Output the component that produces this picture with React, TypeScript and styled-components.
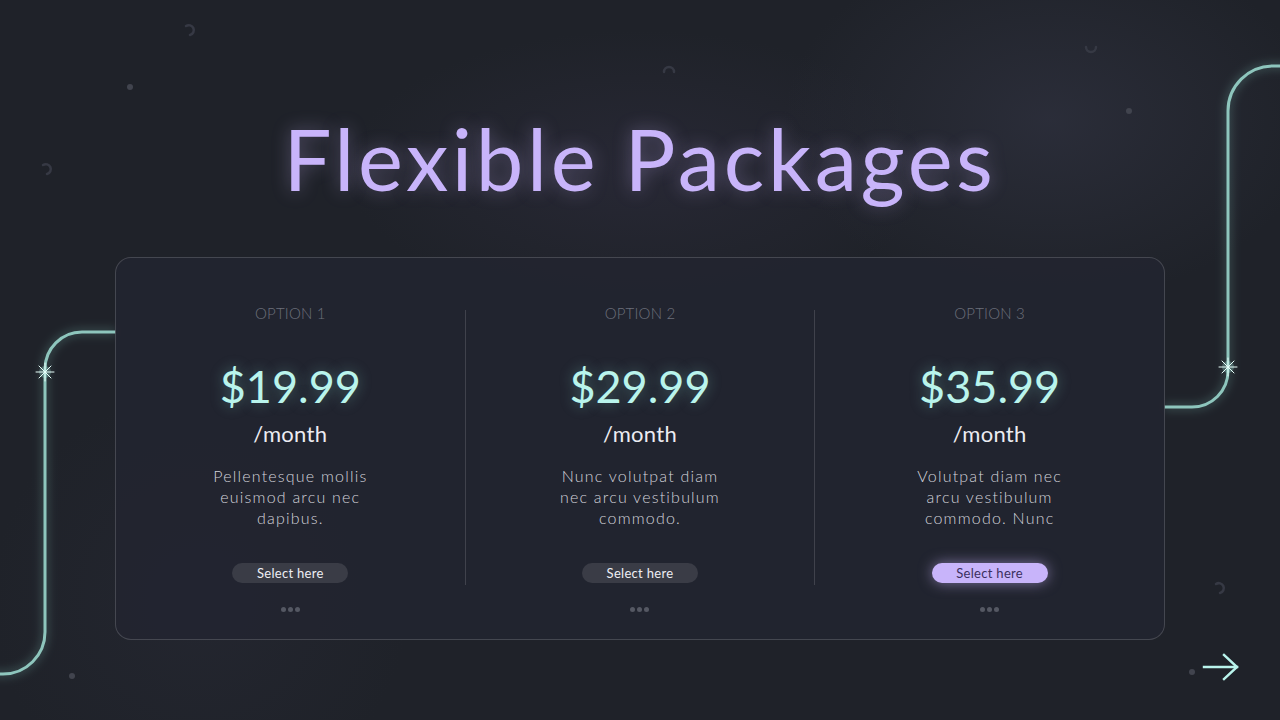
import React from "react";
import styled, { createGlobalStyle } from "styled-components";

const Global = createGlobalStyle`
  html, body { margin: 0; padding: 0; background: #1f2229; }
  * { box-sizing: border-box; }
`;

const Page = styled.div`
  position: relative;
  width: 1280px;
  height: 720px;
  overflow: hidden;
  font-family: "Lato", "Inter", sans-serif;
  background:
    radial-gradient(ellipse 380px 260px at 1050px 120px, rgba(52, 54, 70, 0.55), transparent 70%),
    radial-gradient(ellipse 420px 200px at 640px 170px, rgba(48, 46, 64, 0.5), transparent 70%),
    radial-gradient(ellipse 300px 300px at 200px 600px, rgba(40, 42, 54, 0.5), transparent 70%),
    #1f2229;
  display: flex;
  flex-direction: column;
  align-items: center;
`;

const Deco = styled.svg`
  position: absolute;
  inset: 0;
  pointer-events: none;
`;

const Title = styled.h1`
  position: relative;
  margin: 108px 0 0;
  height: 100px;
  line-height: 100px;
  font-family: "Lato", sans-serif;
  font-weight: 400;
  font-size: 85px;
  letter-spacing: 3.6px;
  color: #c8b4fa;
  text-shadow: 0 0 18px rgba(200, 180, 250, 0.35);
`;

const Card = styled.div`
  position: relative;
  margin-top: 49px;
  width: 1050px;
  height: 383px;
  border: 1px solid rgba(255, 255, 255, 0.16);
  border-radius: 16px;
  background: rgba(34, 36, 48, 0.85);
  display: grid;
  grid-template-columns: 1fr 1px 1fr 1px 1fr;
  padding-top: 45px;
`;

const Divider = styled.div`
  align-self: start;
  margin-top: 7px;
  height: 275px;
  background: rgba(255, 255, 255, 0.14);
`;

const Column = styled.div`
  display: flex;
  flex-direction: column;
  align-items: center;
  text-align: center;
`;

const Option = styled.div`
  height: 20px;
  line-height: 20px;
  font-size: 15px;
  font-weight: 300;
  color: #6d707b;
  letter-spacing: 0.2px;
`;

const Price = styled.div`
  margin-top: 38px;
  height: 50px;
  line-height: 50px;
  font-size: 45px;
  font-weight: 400;
  color: #b9f4ec;
  text-shadow: 0 0 14px rgba(150, 240, 230, 0.35);
`;

const Per = styled.div`
  margin-top: 9px;
  height: 28px;
  line-height: 28px;
  font-size: 22px;
  letter-spacing: 0.3px;
  color: #ececf2;
`;

const Desc = styled.p`
  margin: 17px 0 0;
  width: 174px;
  font-size: 16px;
  line-height: 21px;
  font-weight: 300;
  letter-spacing: 1.2px;
  color: #d2d2da;
`;

const Button = styled.button<{ $active?: boolean }>`
  margin-top: 35px;
  width: 116px;
  height: 20px;
  border: none;
  border-radius: 10px;
  padding: 0;
  font-family: "Lato", sans-serif;
  font-size: 13px;
  font-weight: 400;
  letter-spacing: 0.3px;
  color: ${(p) => (p.$active ? "#3b2f5e" : "#eeeef4")};
  background: ${(p) => (p.$active ? "#c8b4fa" : "#3a3c46")};
  box-shadow: ${(p) => (p.$active ? "0 0 14px rgba(200, 180, 250, 0.55)" : "none")};
`;

const Dots = styled.div`
  margin-top: 24px;
  display: flex;
  gap: 2px;
`;

const Dot = styled.span`
  width: 5px;
  height: 5px;
  border-radius: 50%;
  background: #555863;
`;

const ArrowWrap = styled.div`
  position: absolute;
  right: 40px;
  bottom: 38px;
  width: 38px;
  height: 30px;
`;

const Sparkle = ({ x, y }: { x: number; y: number }) => (
  <g transform={`translate(${x} ${y})`}>
    <circle r="6" fill="rgba(180,255,245,0.25)" />
    <g stroke="#e8fffb" strokeWidth="1" strokeLinecap="round">
      <line x1="-9" y1="0" x2="9" y2="0" />
      <line x1="0" y1="-9" x2="0" y2="9" />
      <line x1="-6" y1="-6" x2="6" y2="6" />
      <line x1="-6" y1="6" x2="6" y2="-6" />
    </g>
  </g>
);

const plans = [
  { name: "OPTION 1", price: "$19.99", desc: "Pellentesque mollis euismod arcu nec dapibus.", active: false },
  { name: "OPTION 2", price: "$29.99", desc: "Nunc volutpat diam nec arcu vestibulum commodo.", active: false },
  { name: "OPTION 3", price: "$35.99", desc: "Volutpat diam nec arcu vestibulum commodo. Nunc", active: true },
];

export default function App() {
  return (
    <>
      <Global />
      <Page>
        <Deco width="1280" height="720" viewBox="0 0 1280 720">
          <defs>
            <filter id="glow" x="-50%" y="-50%" width="200%" height="200%">
              <feGaussianBlur stdDeviation="4" />
            </filter>
          </defs>
          <path
            d="M116 332 H82 A37 37 0 0 0 45 369 V632 A42 42 0 0 1 3 674 H-10"
            fill="none"
            stroke="rgba(140,210,200,0.2)"
            strokeWidth="8"
            filter="url(#glow)"
          />
          <path
            d="M116 332 H82 A37 37 0 0 0 45 369 V632 A42 42 0 0 1 3 674 H-10"
            fill="none"
            stroke="#8ec6bd"
            strokeWidth="3"
          />
          <path
            d="M1164 407 H1192 A36 36 0 0 0 1228 371 V111 A45 45 0 0 1 1273 66 H1290"
            fill="none"
            stroke="rgba(140,210,200,0.2)"
            strokeWidth="8"
            filter="url(#glow)"
          />
          <path
            d="M1164 407 H1192 A36 36 0 0 0 1228 371 V111 A45 45 0 0 1 1273 66 H1290"
            fill="none"
            stroke="#8ec6bd"
            strokeWidth="3"
          />
          <Sparkle x={45} y={372} />
          <Sparkle x={1228} y={367} />
          <g fill="none" stroke="#363944" strokeWidth="2.5" strokeLinecap="round">
            <path d="M186 26 A5 5 0 1 1 190 35" />
            <path d="M43 165 A5 5 0 1 1 47 174" />
            <path d="M664 72 A5 5 0 1 1 674 72" />
            <path d="M1086 47 A5 5 0 1 0 1096 47" />
            <path d="M1216 584 A5 5 0 1 1 1220 593" />
          </g>
          <g fill="#41444e">
            <circle cx="130" cy="87" r="3" />
            <circle cx="1129" cy="111" r="3" />
            <circle cx="72" cy="676" r="3" />
            <circle cx="1192" cy="672" r="3" />
          </g>
        </Deco>
        <Title>Flexible Packages</Title>
        <Card>
          {plans.map((p, i) => (
            <React.Fragment key={p.name}>
              {i > 0 && <Divider />}
              <Column>
                <Option>{p.name}</Option>
                <Price>{p.price}</Price>
                <Per>/month</Per>
                <Desc>{p.desc}</Desc>
                <Button $active={p.active}>Select here</Button>
                <Dots>
                  <Dot />
                  <Dot />
                  <Dot />
                </Dots>
              </Column>
            </React.Fragment>
          ))}
        </Card>
        <ArrowWrap>
          <svg width="38" height="30" viewBox="0 0 38 30">
            <g stroke="#b9f4ec" strokeWidth="2.4" fill="none" strokeLinecap="square">
              <line x1="2" y1="15" x2="35" y2="15" />
              <polyline points="22,3 35,15 22,27" />
            </g>
          </svg>
        </ArrowWrap>
      </Page>
    </>
  );
}
